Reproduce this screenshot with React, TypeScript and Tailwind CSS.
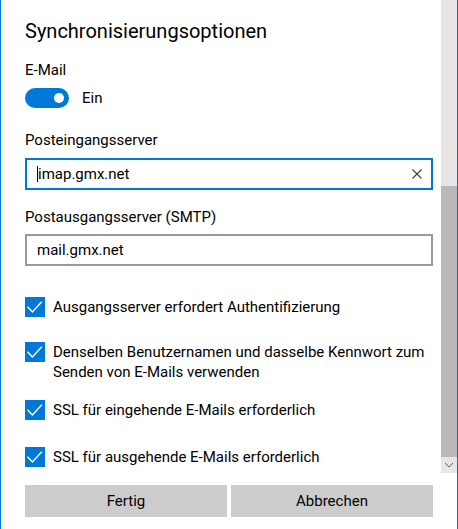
import { useState } from "react"

const font = { fontFamily: 'Roboto, "Noto Sans", sans-serif' }

function Toggle({ on }: { on: boolean }) {
  return (
    <div className="flex items-center">
      <div className="flex h-[20px] w-[44px] items-center justify-end rounded-full bg-[#0078d7] pr-[5px]">
        <div className="h-[10px] w-[10px] rounded-full bg-white" />
      </div>
      <span className="ml-[13px] text-[15px] leading-[20px] text-black">{on ? "Ein" : "Aus"}</span>
    </div>
  )
}

function CheckRow({ label, className }: { label: React.ReactNode; className?: string }) {
  return (
    <div className={"flex items-start " + (className ?? "")}>
      <div className="flex h-[20px] w-[20px] shrink-0 items-center justify-center bg-[#0078d7]">
        <svg width="20" height="20" viewBox="0 0 20 20" fill="none">
          <path d="M2.5 9.8 L7.4 15 L16.8 4.8" stroke="white" strokeWidth="1.4" />
        </svg>
      </div>
      <span className="ml-[8px] whitespace-nowrap text-[15px] leading-[20px] text-black">{label}</span>
    </div>
  )
}

export default function App() {
  const [incoming] = useState("imap.gmx.net")
  const [outgoing] = useState("mail.gmx.net")

  return (
    <div className="flex h-[529px] w-[458px] border-x border-[#0078d7] bg-white" style={font}>
      {/* scrollable settings body */}
      <div className="flex flex-1 flex-col pl-[24px] pr-[8px]">
        <h2 className="mt-[17px] text-[20px] leading-[28px] font-normal text-black">Synchronisierungsoptionen</h2>

        <div className="mt-[15px] text-[15px] leading-[20px] text-black">E-Mail</div>
        <div className="mt-[8px]">
          <Toggle on />
        </div>

        <div className="mt-[22px] text-[15px] leading-[20px] text-black">Posteingangsserver</div>
        <div className="mt-[8px] flex h-[32px] items-center border-2 border-[#0078d7] pl-[10px] pr-[9px]">
          <span className="h-[16px] w-px bg-black" />
          <span className="flex-1 text-[15px] leading-[20px] text-black">{incoming}</span>
          <svg width="10" height="10" viewBox="0 0 10 10" className="shrink-0">
            <path d="M0.5 0.5 L9.5 9.5 M9.5 0.5 L0.5 9.5" stroke="#3c3c3c" strokeWidth="1.1" />
          </svg>
        </div>

        <div className="mt-[17px] text-[15px] leading-[20px] text-black">Postausgangsserver (SMTP)</div>
        <div className="mt-[7px] flex h-[32px] items-center border-2 border-[#999999] pl-[10px]">
          <span className="text-[15px] leading-[20px] text-black">{outgoing}</span>
        </div>

        <CheckRow className="mt-[31px]" label="Ausgangsserver erfordert Authentifizierung" />
        <CheckRow
          className="mt-[25px]"
          label={
            <>
              Denselben Benutzernamen und dasselbe Kennwort zum
              <br />
              Senden von E-Mails verwenden
            </>
          }
        />
        <CheckRow className="mt-[18px]" label="SSL für eingehende E-Mails erforderlich" />
        <CheckRow className="mt-[27px]" label="SSL für ausgehende E-Mails erforderlich" />

        <div className="mt-[18px] flex gap-[4px]">
          <button className="h-[32px] w-[202px] bg-[#cccccc] text-[15px] text-black">Fertig</button>
          <button className="h-[32px] w-[202px] bg-[#cccccc] text-[15px] text-black">Abbrechen</button>
        </div>
      </div>

      {/* scrollbar */}
      <div className="flex h-[473px] w-[16px] flex-col">
        <div className="h-[186px] bg-[#e6e6e6]" />
        <div className="flex-1 bg-[#b9b9b9]" />
        <div className="flex h-[16px] items-center justify-center bg-[#e6e6e6]">
          <svg width="10" height="6" viewBox="0 0 10 6" fill="none">
            <path d="M1 1 L5 5 L9 1" stroke="#606060" strokeWidth="1" />
          </svg>
        </div>
      </div>
    </div>
  )
}
